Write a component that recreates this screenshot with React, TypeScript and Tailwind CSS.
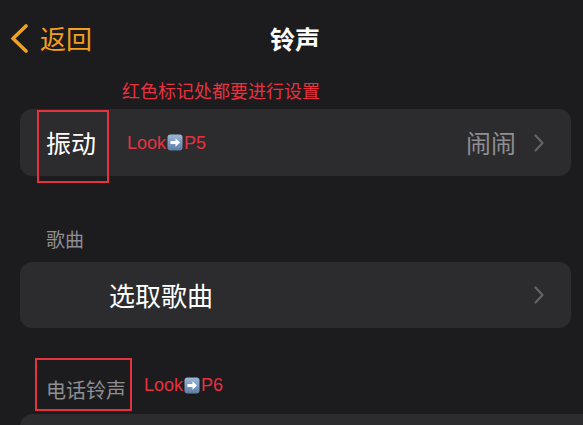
import React from "react";

const cjk = "font-['Noto_Sans_CJK_SC','Noto_Sans',sans-serif]";
const latin = "font-['Liberation_Sans','Noto_Sans_CJK_SC',sans-serif]";

function ArrowEmoji() {
  return (
    <svg width="16" height="17" viewBox="0 0 16 17" className="inline-block mx-[1px]">
      <defs>
        <linearGradient id="eg" x1="0" y1="0" x2="0" y2="1">
          <stop offset="0" stopColor="#9db7d6" />
          <stop offset="1" stopColor="#5d7fa6" />
        </linearGradient>
      </defs>
      <rect x="0.5" y="0.5" width="15" height="16" rx="3" fill="url(#eg)" />
      <path d="M3.5 7h5V4.2L13 8.5l-4.5 4.3V10h-5z" fill="#fff" />
    </svg>
  );
}

function Look({ page, className = "" }: { page: string; className?: string }) {
  return (
    <span className={`${latin} text-[18px] leading-none text-[#e5323f] flex items-center ${className}`}>
      Look
      <ArrowEmoji />
      {page}
    </span>
  );
}

function Chevron() {
  return (
    <svg width="12" height="20" viewBox="0 0 12 20" fill="none">
      <path d="M2.5 2.5l7 7.5-7 7.5" stroke="#646468" strokeWidth="2.2" strokeLinecap="round" strokeLinejoin="round" />
    </svg>
  );
}

export default function App() {
  return (
    <div className={`relative w-[583px] h-[425px] overflow-hidden bg-[#1c1c1e] ${cjk}`}>
      {/* header */}
      <div className="grid grid-cols-[1fr_auto_1fr] items-center h-[76px]">
        <div className="flex items-center pl-[10px] gap-[10px] text-[#f2a01d]">
          <svg width="20" height="30" viewBox="0 0 20 30" fill="none">
            <path d="M16 3L3 15.5 16 28" stroke="#f2a01d" strokeWidth="3.6" strokeLinecap="round" strokeLinejoin="round" />
          </svg>
          <span className="text-[26px] leading-none">返回</span>
        </div>
        <div className="ml-[7px] text-[25px] leading-none font-bold text-white">铃声</div>
        <div />
      </div>

      <div className="pl-[122px] h-[22px] leading-[22px] text-[18px] text-[#e5323f] mt-[3px]">
        红色标记处都要进行设置
      </div>

      {/* vibration */}
      <div className="ml-[20px] mr-[12px] mt-[8px] h-[67px] rounded-[12px] bg-[#2c2c2e] flex items-center pl-[26px] pr-[26px]">
        <span className="text-[25px] leading-none text-white">振动</span>
        <Look page="P5" className="ml-[31px]" />
        <span className="ml-auto text-[25px] leading-none text-[#8e8e93]">闹闹</span>
        <span className="ml-[17px] flex"><Chevron /></span>
      </div>

      <div className="pl-[46px] mt-[48px] h-[30px] leading-[30px] text-[19px] text-[#8e8e93]">歌曲</div>

      <div className="ml-[20px] mr-[12px] mt-[8px] h-[66px] rounded-[12px] bg-[#2c2c2e] flex items-center pl-[89px] pr-[26px]">
        <span className="text-[26px] leading-none text-white">选取歌曲</span>
        <span className="ml-auto flex"><Chevron /></span>
      </div>

      <div className="pl-[46px] mt-[47px] h-[30px] flex items-center">
        <span className="text-[20px] leading-none text-[#8e8e93]">电话铃声</span>
        <Look page="P6" className="ml-[18px] mb-[10px]" />
      </div>

      <div className="ml-[20px] mt-[9px] h-[60px] rounded-tl-[12px] bg-[#2c2c2e]" />

      {/* red annotation boxes */}
      <div className="absolute left-[37px] top-[110px] w-[72px] h-[73px] border-2 border-[#e5323f]" />
      <div className="absolute left-[35px] top-[358px] w-[97px] h-[53px] border-2 border-[#e5323f]" />
    </div>
  );
}
